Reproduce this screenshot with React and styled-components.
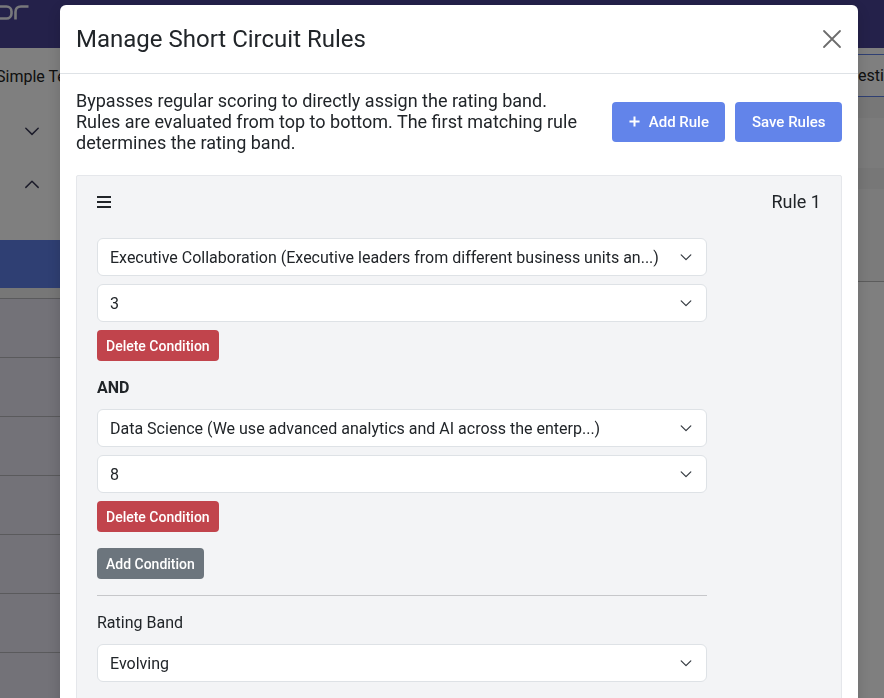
import React from 'react';
// styles
import styled, { createGlobalStyle } from 'styled-components';

const GlobalStyle = createGlobalStyle`
  html, body {
    margin: 0;
    padding: 0;
  }
  body {
    font-family: Roboto, "Liberation Sans", sans-serif;
    color: #212529;
    overflow: hidden;
  }
`;

const conditions = [
  {
    question:
      'Executive Collaboration (Executive leaders from different business units an...)',
    value: '3',
  },
  {
    question:
      'Data Science (We use advanced analytics and AI across the enterp...)',
    value: '8',
  },
];

const sideRows = [0, 1, 2, 3, 4, 5, 6];

const ChevronDown = ({ size = 12, color = '#343a40', width = 1.6 }) => (
  <svg width={size} height={size} viewBox='0 0 16 16' fill='none'>
    <path
      d='M2.5 5.5 L8 11 L13.5 5.5'
      stroke={color}
      strokeWidth={width}
      strokeLinecap='round'
      strokeLinejoin='round'
    />
  </svg>
);

const ChevronUp = ({ size = 12, color = '#343a40', width = 1.6 }) => (
  <svg width={size} height={size} viewBox='0 0 16 16' fill='none'>
    <path
      d='M2.5 11 L8 5.5 L13.5 11'
      stroke={color}
      strokeWidth={width}
      strokeLinecap='round'
      strokeLinejoin='round'
    />
  </svg>
);

// brand mark, only its right end shows behind the dialog
const LogoMark = () => (
  <svg width='30' height='24' viewBox='0 0 30 24' fill='none'>
    <rect
      x='-8'
      y='6.5'
      width='19.5'
      height='12'
      rx='5'
      stroke='#f0f0f6'
      strokeWidth='2.6'
    />
    <path
      d='M15.5 19.5 V12 Q15.5 6.5 21 6.5 H28.5'
      stroke='#f0f0f6'
      strokeWidth='2.6'
    />
  </svg>
);

const Select = ({ value }) => (
  <SelectWrap>
    <SelectBox defaultValue={value}>
      <option value={value}>{value}</option>
    </SelectBox>
    <SelectArrow>
      <ChevronDown size={14} width={1.4} />
    </SelectArrow>
  </SelectWrap>
);

const App = () => {
  return (
    <>
      <GlobalStyle />
      <Page>
        <Navbar>
          <LogoMark />
        </Navbar>
        <Content>
          <Sidebar>
            <SideTab>Simple Text</SideTab>
            <Toggle>
              <ChevronDown size={18} color='#383854' width={1.3} />
            </Toggle>
            <Toggle>
              <ChevronUp size={18} color='#383854' width={1.3} />
            </Toggle>
            <SideGap />
            <SideRow $active />
            <SideBand />
            {sideRows.map((r) => (
              <SideRow key={r} />
            ))}
          </Sidebar>
          <Main>
            <TabBar>
              <TabLabel>Questions</TabLabel>
            </TabBar>
            <MainBand />
            <MainBlock />
            <MainBand />
            <MainBlock $lined />
          </Main>
        </Content>
      </Page>

      <Backdrop>
        <Dialog>
          <Header>
            <Title>Manage Short Circuit Rules</Title>
            <Close aria-label='Close'>
              <svg width='20' height='20' viewBox='0 0 20 20'>
                <path
                  d='M2 2 L18 18 M18 2 L2 18'
                  stroke='#6c6c6c'
                  strokeWidth='1.8'
                  strokeLinecap='round'
                />
              </svg>
            </Close>
          </Header>
          <Body>
            <Intro>
              <Description>
                Bypasses regular scoring to directly assign the rating band.
                Rules are evaluated from top to bottom. The first matching rule
                determines the rating band.
              </Description>
              <Actions>
                <PrimaryButton>
                  <svg width='11' height='11' viewBox='0 0 12 12'>
                    <path
                      d='M6 0.5 V11.5 M0.5 6 H11.5'
                      stroke='#fff'
                      strokeWidth='2.2'
                    />
                  </svg>
                  Add Rule
                </PrimaryButton>
                <PrimaryButton>Save Rules</PrimaryButton>
              </Actions>
            </Intro>

            <RuleCard>
              <RuleHead>
                <Handle>
                  <span />
                  <span />
                  <span />
                </Handle>
                <RuleName>Rule 1</RuleName>
              </RuleHead>

              <RuleBody>
                {conditions.map((c, i) => (
                  <React.Fragment key={c.question}>
                    {i > 0 && <Joiner>AND</Joiner>}
                    <Condition>
                      <Select value={c.question} />
                      <Select value={c.value} />
                      <SmallButton $variant='danger'>Delete Condition</SmallButton>
                    </Condition>
                  </React.Fragment>
                ))}
                <AddRow>
                  <SmallButton $variant='secondary'>Add Condition</SmallButton>
                </AddRow>
                <Divider />
                <FieldLabel>Rating Band</FieldLabel>
                <Select value='Evolving' />
              </RuleBody>
            </RuleCard>
          </Body>
        </Dialog>
      </Backdrop>
    </>
  );
};

// background page
const Page = styled.div`
  height: 698px;
  overflow: hidden;
  background: #fff;
`;

const Navbar = styled.div`
  height: 48px;
  background: #484294;
  display: flex;
  align-items: flex-start;
  overflow: hidden;
`;

const Content = styled.div`
  display: grid;
  grid-template-columns: 60px 1fr;
  height: 650px;
`;

const Sidebar = styled.div`
  overflow: hidden;
  display: flex;
  flex-direction: column;
  & > * {
    flex: none;
  }
`;

const SideTab = styled.div`
  height: 56px;
  display: flex;
  align-items: center;
  margin-left: -4px;
  font-size: 16px;
  white-space: nowrap;
  color: #222;
`;

const Toggle = styled.div`
  height: 53px;
  display: flex;
  align-items: center;
  padding-left: 23px;
`;

const SideGap = styled.div`
  height: 30px;
`;

const SideBand = styled.div`
  height: 10px;
  background: #eeeeee;
`;

const SideRow = styled.div`
  height: ${(p) => (p.$active ? '48px' : '58px')};
  background: ${(p) => (p.$active ? '#5e7ee6' : '#e6e4f0')};
  border-top: ${(p) => (p.$active ? 'none' : '1px solid #b4b4b8')};
`;

const Main = styled.div`
  display: flex;
  flex-direction: column;
  overflow: hidden;
  padding-top: 6px;
  & > * {
    flex: none;
  }
`;

const TabBar = styled.div`
  height: 41px;
  border-top: 1px solid #5e7ee6;
  border-bottom: 1px solid #5e7ee6;
  display: flex;
  justify-content: flex-end;
  align-items: center;
`;

const TabLabel = styled.div`
  margin-right: -26px;
  font-size: 16px;
  color: #222;
`;

const MainBand = styled.div`
  height: 21px;
  background: #eeeeee;
`;

const MainBlock = styled.div`
  height: ${(p) => (p.$lined ? '92px' : '50px')};
  background: #f6f6f6;
  border-bottom: ${(p) => (p.$lined ? '1px solid #b9b9b9' : 'none')};
`;

// modal
const Backdrop = styled.div`
  position: fixed;
  inset: 0;
  background: rgba(0, 0, 0, 0.5);
  padding: 5px 0 0 60px;
  overflow: hidden;
`;

const Dialog = styled.div`
  width: 798px;
  min-height: 760px;
  background: #fff;
  border-radius: 6px;
  box-shadow: 0 4px 16px rgba(0, 0, 0, 0.15);
`;

const Header = styled.div`
  display: flex;
  align-items: center;
  justify-content: space-between;
  padding: 16px 12px 16px 16px;
  border-bottom: 1px solid #dee2e6;
`;

const Title = styled.h5`
  margin: 0;
  font-size: 24px;
  line-height: 36px;
  font-weight: 400;
  color: #212529;
`;

const Close = styled.button`
  width: 28px;
  height: 28px;
  border: 0;
  padding: 0;
  background: transparent;
  display: flex;
  align-items: center;
  justify-content: center;
`;

const Body = styled.div`
  padding: 16px;
`;

const Intro = styled.div`
  display: flex;
  align-items: center;
  justify-content: space-between;
  margin-bottom: 22px;
`;

const Description = styled.p`
  margin: 0;
  max-width: 510px;
  font-size: 18px;
  line-height: 21px;
  color: #212529;
`;

const Actions = styled.div`
  display: flex;
  gap: 10px;
`;

const PrimaryButton = styled.button`
  height: 40px;
  display: flex;
  align-items: center;
  gap: 9px;
  padding: 0 16.5px;
  border: 0;
  border-radius: 4px;
  background: #6284ea;
  color: #fff;
  font-family: Roboto, "Liberation Sans", sans-serif;
  font-size: 15px;
  font-weight: 500;
`;

const RuleCard = styled.div`
  background: #f3f4f6;
  border: 1px solid #e5e7eb;
  border-radius: 2px;
  padding: 12px 20px 24px;
`;

const RuleHead = styled.div`
  height: 26px;
  display: flex;
  align-items: center;
  justify-content: space-between;
  margin-bottom: 24px;
`;

const Handle = styled.div`
  width: 14px;
  margin-top: 2px;
  display: flex;
  flex-direction: column;
  gap: 3px;
  span {
    height: 2px;
    background: #212529;
  }
`;

const RuleName = styled.div`
  font-size: 18px;
  color: #212529;
`;

const RuleBody = styled.div`
  width: 610px;
`;

const Condition = styled.div`
  display: flex;
  flex-direction: column;
  align-items: flex-start;
  gap: 8px;
`;

const Joiner = styled.div`
  margin: 15px 0 9px;
  font-size: 16px;
  line-height: 24px;
  font-weight: 700;
  color: #212529;
`;

const SelectWrap = styled.div`
  position: relative;
  width: 100%;
`;

const SelectBox = styled.select`
  appearance: none;
  width: 100%;
  height: 38px;
  padding: 0 40px 0 12px;
  border: 1px solid #dee2e6;
  border-radius: 6px;
  background: #fff;
  font-family: Roboto, "Liberation Sans", sans-serif;
  font-size: 16px;
  color: #212529;
`;

const SelectArrow = styled.span`
  position: absolute;
  right: 14px;
  top: 12px;
  pointer-events: none;
  display: flex;
`;

const SmallButton = styled.button`
  height: 31px;
  padding: 0 9px;
  border: 0;
  border-radius: 4px;
  background: ${(p) => (p.$variant === 'danger' ? '#c1444c' : '#6c757d')};
  color: #fff;
  font-family: Roboto, "Liberation Sans", sans-serif;
  font-size: 14px;
  font-weight: 500;
`;

const AddRow = styled.div`
  margin-top: 16px;
`;

const Divider = styled.hr`
  margin: 16px 0 15px;
  border: 0;
  border-top: 1px solid #c6c7ca;
`;

const FieldLabel = styled.div`
  font-size: 16px;
  line-height: 24px;
  margin-bottom: 9px;
  color: #212529;
`;

export default App;
